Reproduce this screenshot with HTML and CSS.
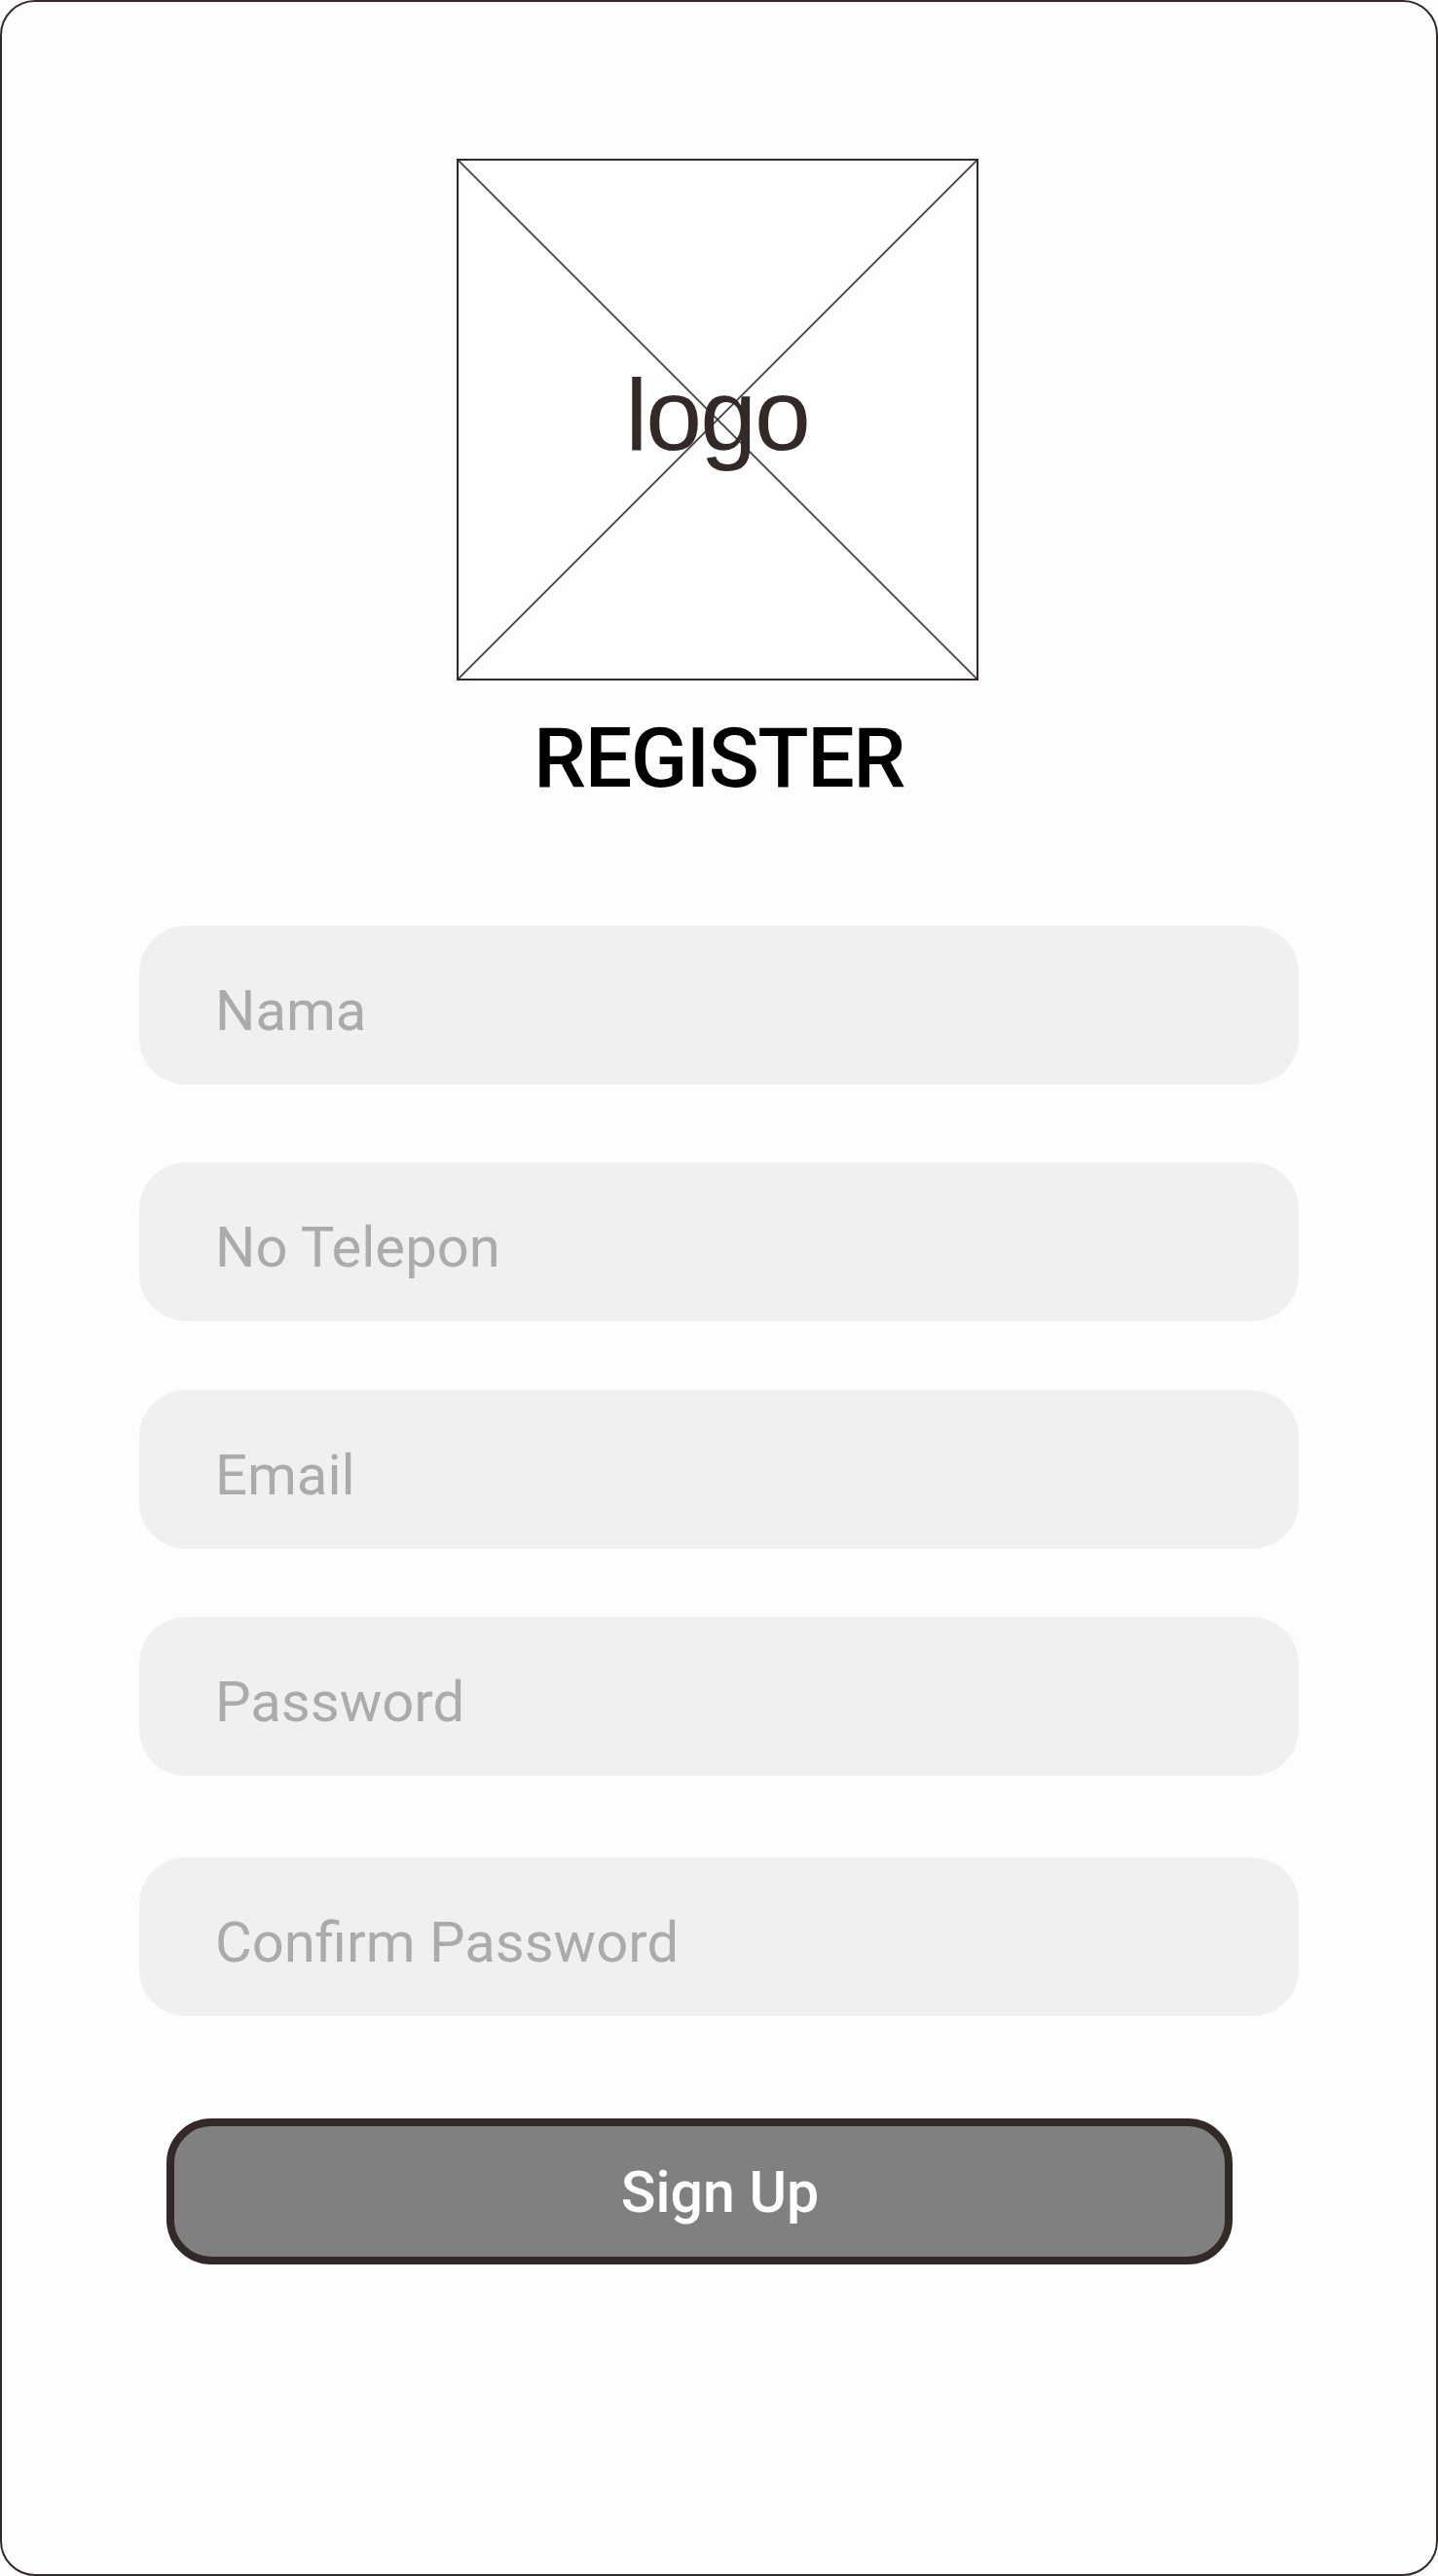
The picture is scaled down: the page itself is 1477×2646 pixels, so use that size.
FILE: index.html
```html
<!DOCTYPE html>
<html lang="id">
<head>
<meta charset="utf-8">
<title>Register</title>
<link rel="stylesheet" href="styles.css">
</head>
<body>
<main class="frame">
  <div class="logo-box"><span class="logo-text">logo</span></div>
  <h1 class="title">REGISTER</h1>
  <form class="form">
    <div class="field field-nama"><span class="placeholder">Nama</span></div>
    <div class="field field-telp"><span class="placeholder">No Telepon</span></div>
    <div class="field field-email"><span class="placeholder">Email</span></div>
    <div class="field field-pass"><span class="placeholder">Password</span></div>
    <div class="field field-confirm"><span class="placeholder">Confirm Password</span></div>
    <button type="button" class="btn">Sign Up</button>
  </form>
</main>
</body>
</html>
```

FILE: styles.css
```css
html, body {
  margin: 0;
  padding: 0;
  background: #fdfdfd;
}

.frame {
  box-sizing: border-box;
  width: 1477px;
  height: 2646px;
  border: 2px solid #332a28;
  border-radius: 36px;
  background: #fdfdfd;
  display: flex;
  flex-direction: column;
  align-items: center;
  padding-top: 161px;
}

.logo-box {
  box-sizing: border-box;
  width: 536px;
  height: 536px;
  margin-left: -4px;
  border: 2px solid #332a28;
  background:
    linear-gradient(to top right, transparent calc(50% - 1.6px), #332a28 50%, transparent calc(50% + 1.6px)),
    linear-gradient(to bottom right, transparent calc(50% - 1.6px), #332a28 50%, transparent calc(50% + 1.6px)),
    #ffffff;
  display: flex;
  justify-content: center;
}

.logo-text {
  font-family: "Liberation Sans", Arial, sans-serif;
  font-size: 104px;
  line-height: 1;
  letter-spacing: -2px;
  color: #332a28;
  margin-top: 209px;
}

.title {
  margin: 37px 0 0 0;
  font-family: Roboto, "Noto Sans", sans-serif;
  font-weight: 500;
  font-size: 86px;
  line-height: 86px;
  color: #000000;
  letter-spacing: -1.5px;
}

.form {
  display: flex;
  flex-direction: column;
  width: 100%;
  align-items: center;
}

.field {
  box-sizing: border-box;
  width: 1191px;
  height: 163px;
  border-radius: 48px;
  background: #f0f0f0;
  padding: 58px 0 0 78px;
}

.field-nama { margin-top: 129px; }
.field-telp { margin-top: 80px; }
.field-email { margin-top: 71px; }
.field-pass { margin-top: 70px; }
.field-confirm { margin-top: 84px; }

.placeholder {
  display: block;
  font-family: Roboto, "Noto Sans", sans-serif;
  font-size: 58px;
  line-height: 58px;
  color: #ababab;
}

.btn {
  box-sizing: border-box;
  align-self: flex-start;
  margin: 105px 0 0 169px;
  width: 1095px;
  height: 150px;
  border: 8px solid #332a28;
  border-radius: 46px;
  background: #808080;
  color: #ffffff;
  font-family: Roboto, "Noto Sans", sans-serif;
  font-weight: 500;
  font-size: 59px;
  line-height: 1;
  padding: 0 0 0 42px;
  display: flex;
  align-items: center;
  justify-content: center;
}
```
